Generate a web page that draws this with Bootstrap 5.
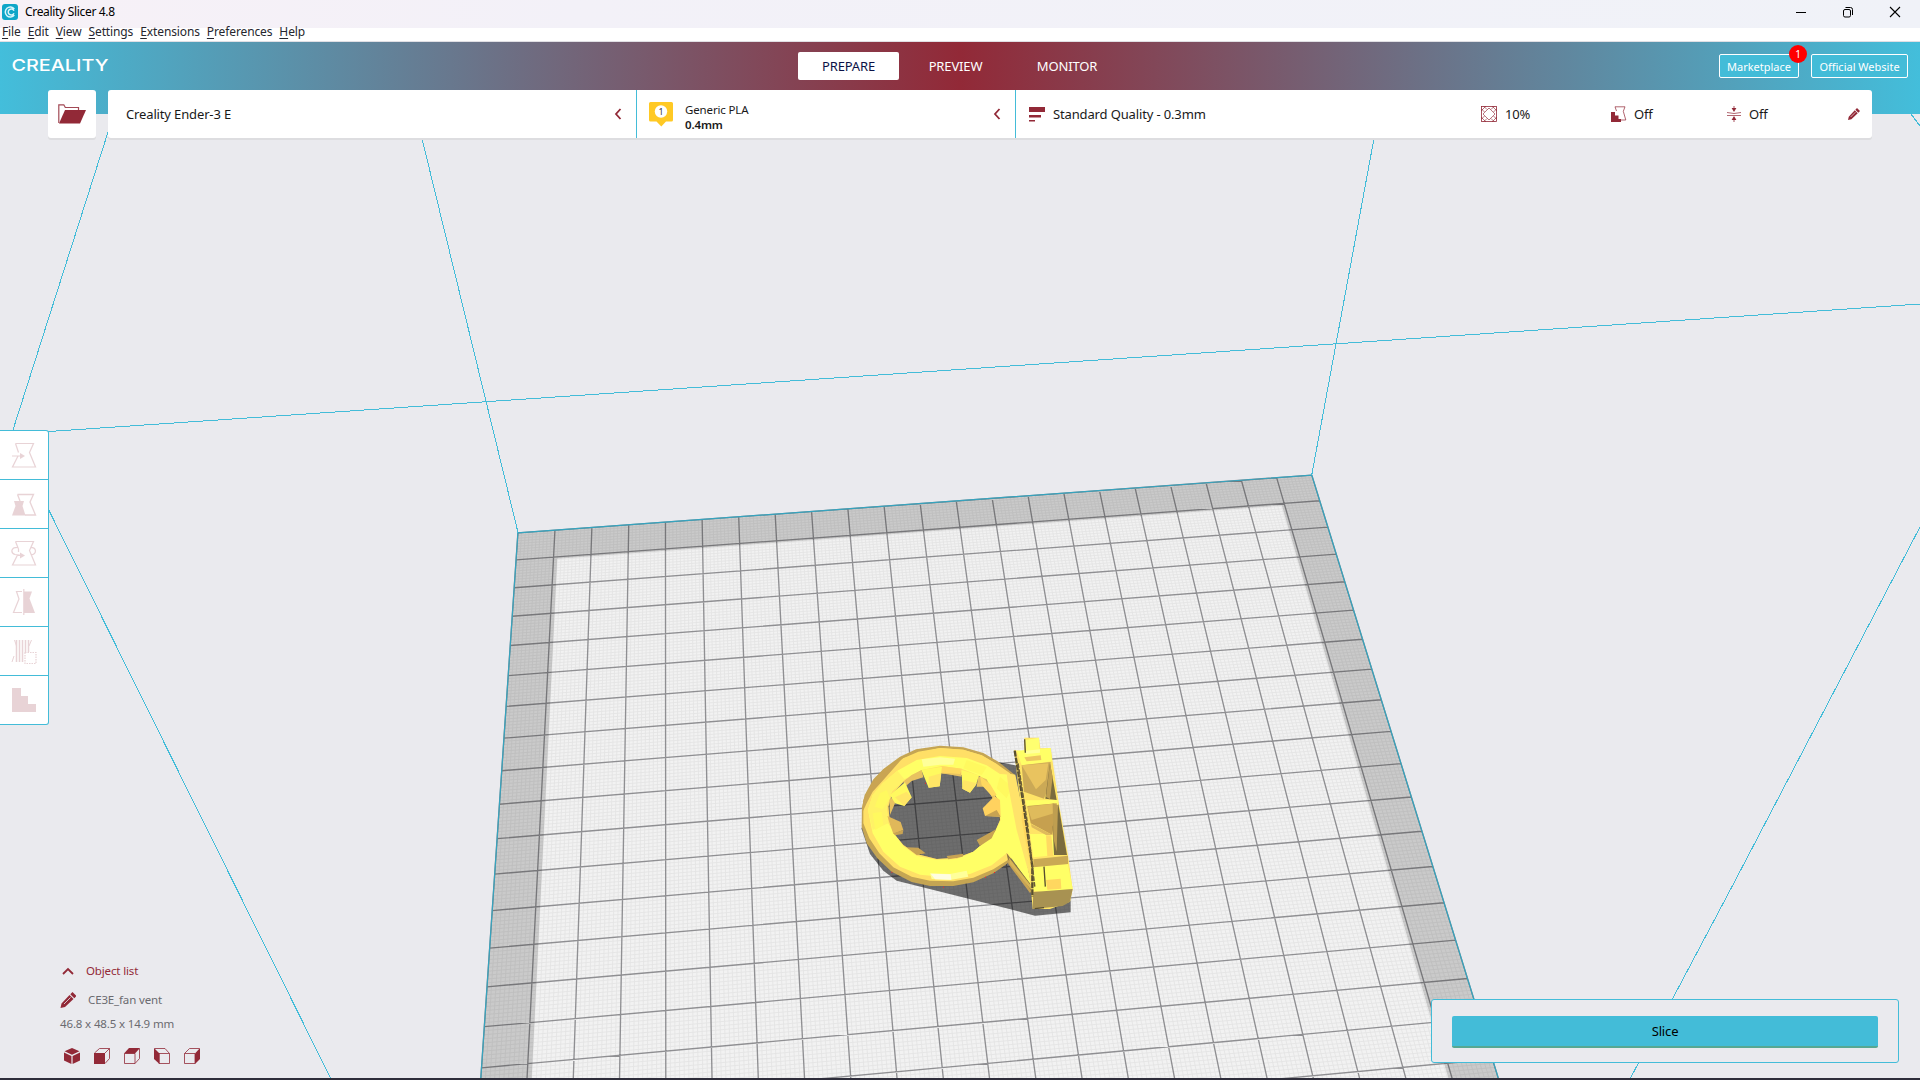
<!DOCTYPE html>
<html lang="en">
<head>
<meta charset="utf-8">
<meta name="viewport" content="width=device-width, initial-scale=1">
<title>Creality Slicer 4.8</title>
<link href="https://cdn.jsdelivr.net/npm/bootstrap@5.3.0/dist/css/bootstrap.min.css" rel="stylesheet">
<style>
  :root { --cy: #43bcd8; --wine: #922937; }
  body { font-family: "Noto Sans", "Open Sans", sans-serif; font-size: 13px; line-height: 18px; letter-spacing: -.14px; color: #191919; background: #eaeaee; overflow: hidden; }
  svg { display: block; flex: none; }
  .title-strip { height: 28px; background: linear-gradient(90deg, #f7f1f7, #f3f1f8 30%, #f0f2f8); font-size: 12px; color: #000; padding: 0 19px 5px 2px; }
  .title-strip .caption { margin-top: 1px; letter-spacing: -.32px; }
  .title-strip .win { gap: 35px; }
  .menu-strip { height: 14px; background: #fff; border-bottom: 1px solid #e0dfe4; font-size: 12px; line-height: 10px; letter-spacing: -.12px; gap: 7px; padding-left: 2px; color: #26262e; }
  .menu-strip span { position: relative; top: -1px; }
  .menu-strip u { text-underline-offset: 2px; }
  .stage { min-height: 0; }
  .scene { position: absolute; inset: 0; }
  .top-area { background: linear-gradient(90deg, #43bedb 0, #922937 50%, #43bedb 100%) 0 0 / 100% 72px no-repeat; }
  .nav-row { height: 48px; padding: 0 12px; }
  .side { flex: 1 1 0; }
  .nav-mid { gap: 6px; }
  .links { gap: 12px; }
  .stage-tab { height: 28px; border-radius: 2px; color: #fff; width: 101px; }
  .stage-tab.on { background: #fff; color: #0b1146; }
  .stage-tab.wide { width: 110px; }
  .link-box { height: 24px; border: 1px solid #fff; border-radius: 2px; background: var(--cy); color: #fff; font-size: 11px; letter-spacing: 0; padding-top: 1px; }
  .count-dot { position: absolute; right: -9px; top: -10px; width: 18px; height: 18px; border-radius: 50%; background: #f00; font-size: 10px; }
  .bar-row { height: 48px; padding: 0 48px; gap: 12px; }
  .tile { background: #fff; border-radius: 3px; box-shadow: 0 2px 0 #dddde0; }
  .seg + .seg { border-left: 1px solid var(--cy); }
  .seg-machine { width: 528px; padding: 0 14px 0 18px; }
  .seg-material { width: 379px; padding: 0 14px 0 12px; }
  .seg-profile { padding: 0 12px 0 13px; }
  .mat-text { font-size: 11.500px; line-height: 15px; margin: 6px 0 0 11px; }
  .mat-text .size { font-weight: 600; }
  .val { margin-left: 8px; }
  .tools { width: 49px; margin-top: 292px; background: #fff; border: 1px solid var(--cy); border-left: 0; border-radius: 0 3px 3px 0; }
  .tool { height: 49px; padding-left: 11px; }
  .tool + .tool { border-top: 1px solid var(--cy); }
  .tool:first-child { height: 48px; }
  .tool svg { opacity: .2; }
  .info { padding-left: 60px; padding-bottom: 14px; font-size: 11.500px; color: #6b6b70; }
  .wine { color: var(--wine); }
  .views { gap: 14px; margin: 15px 0 0 4px; }
  .slice-box { width: 468px; height: 64px; margin: 0 21px 15px 0; background: #eaeaee; border: 1px solid var(--cy); border-radius: 3px; padding: 16px 20px 14px; }
  .slice-btn { height: 32px; background: var(--cy); border-bottom: 2px solid #57a892; border-radius: 2px; color: #000; }
  .edge { height: 2px; background: #2e2d3a; }
</style>
</head>
<body>
<div class="vh-100 d-flex flex-column">
  <div class="title-strip d-flex align-items-center justify-content-between">
    <div class="d-flex align-items-center gap-2">
      <svg width="16" height="16" viewBox="0 0 16 16"><rect width="16" height="16" rx="3" fill="#0fa6c8"/><path d="M12.300 5A5 5 0 1 0 12.300 11M12 6.800A3 3 0 1 0 12 9.200" fill="none" stroke="#d9f5fb" stroke-width="1.500"/></svg>
      <span class="caption" style="margin-left:-1px">Creality Slicer 4.8</span>
    </div>
    <div class="win d-flex align-items-center">
      <svg width="12" height="12" viewBox="0 0 12 12"><path d="M1 6.500h10" stroke="#000"/></svg>
      <svg width="12" height="12" viewBox="0 0 12 12" fill="none" stroke="#000"><rect x="1.500" y="3.500" width="7" height="7.500" rx="1.500"/><path d="M3.500 1.500h5a2 2 0 0 1 2 2v5.500"/></svg>
      <svg width="12" height="12" viewBox="0 0 12 12"><path d="M1 1l10 10M11 1L1 11" stroke="#000" stroke-width="1.100"/></svg>
    </div>
  </div>
  <div class="menu-strip d-flex">
    <span><u>F</u>ile</span><span><u>E</u>dit</span><span><u>V</u>iew</span><span><u>S</u>ettings</span><span><u>E</u>xtensions</span><span><u>P</u>references</span><span><u>H</u>elp</span>
  </div>

  <div class="stage flex-grow-1 position-relative">
    <svg class="scene" width="1920" height="1036" viewBox="0 42 1920 1036">
      <path id="bed" fill="#f2f2f2"/>
      <path id="fine" fill="none" stroke="#e4e4e4" stroke-width=".9"/>
      <path id="major" fill="none" stroke="#8f8f92" stroke-width="1.350"/>
      <path id="margin" fill="#000" fill-opacity=".165" fill-rule="evenodd"/>
      <path id="rim" fill="none" stroke="#35a4bf" stroke-width="1.200"/>
      <path fill="none" stroke="#43bcd8" stroke-width="1" shape-rendering="crispEdges" d="M112.500 118L12.800 430.500M416 114L518 532.500M1378.500 114L1311.800 474.700M12.300 434L1920 304M48.500 509.500L330.500 1078M1920 527L1735.500 880L1630.500 1078M1911 114L1920 126"/>
      <!-- fan duct model -->
      <g transform="translate(840 720) scale(.33333)">
        <path fill="#000" fill-opacity=".55" d="M470 125L525 136L600 150L692 545L692 577L585 587L520 570L230 497L170 482L130 452L90 402L64 325L150 180L300 120Z"/>
        <path fill="#c5a553" fill-rule="evenodd" d="M66 262L74 225L100 178L130 147L180 110L228 88L300 77L370 82L430 99L475 125L525 165L530 400L500 432L460 460L400 487L340 498L270 498L215 486L155 455L112 415L80 370L65 320ZM190 185L245 150L305 160L365 166L420 168L450 200L475 240L480 300L465 335L430 370L400 395L350 413L290 417L230 402L190 375L165 345L150 310L145 260L155 225Z"/>
        <path fill="#ffe066" fill-rule="evenodd" d="M70 265L80 225L110 178L150 145L190 115L235 95L300 84L370 89L425 106L470 132L510 160L530 400L500 422L460 448L400 473L340 484L270 482L215 470L160 442L118 400L88 355L70 310ZM190 185L245 150L305 160L365 166L420 168L450 200L475 240L480 300L465 335L430 370L400 395L350 413L290 417L230 402L190 375L165 345L150 310L145 260L155 225Z"/>
        <path fill="#ffdf66" d="M130 160L190 115L250 95L300 84L370 89L425 106L470 132L505 165L440 135L370 110L300 106L230 118L170 155L120 200L90 240Z"/>
        <path fill="#ffff66" fill-rule="evenodd" d="M84 270L98 225L128 190L172 152L230 120L300 108L380 114L440 136L480 162L525 165L535 300L575 500L502 398L455 436L390 462L320 472L240 464L180 440L130 395L98 340ZM190 180L245 150L305 138L365 146L420 168L450 200L475 240L482 300L465 335L430 370L400 395L350 417L290 419L230 407L190 378L165 345L145 310L140 260L155 215Z"/>
        <path fill="#fff266" d="M84 270L98 225L128 190L172 152L195 180L155 215L140 260L145 310L98 330Z"/>
        <path fill="#fff95f" d="M104 260L120 220L140 210L150 235L128 268ZM98 280L125 275L130 315L106 330ZM380 120L440 142L425 165L370 145ZM480 170L515 200L500 235L470 205Z"/>
        <path fill="#ffff9a" d="M245 118L300 112L345 116L340 134L300 134L250 140ZM270 460L330 462L380 452L385 470L330 480L275 477Z"/>
        <path fill="#fffde0" d="M272 461L332 463L334 479L285 478Z"/>
        <path fill="#e8c260" d="M190 185L215 165L245 150L250 172L215 183L195 200ZM305 140L360 148L365 170L305 160ZM415 168L440 178L465 225L465 250L440 200L410 200ZM148 240L162 228L165 250L150 285Z"/>
        <path fill="#ffd85f" d="M420 168L450 192L470 225L455 228L425 195ZM305 138L365 146L360 162L306 158Z"/>
        <path fill="#fff95f" d="M244 150L306 140L299 199L266 203ZM365 150L417 166L408 195L390 218L367 206ZM150 225L195 187L215 232L193 258L165 250Z"/>
        <path fill="#ffe666" d="M266 170L304 160L299 199L266 203ZM370 180L410 190L390 218L367 206ZM165 232L200 215L215 232L193 258Z"/>
        <path fill="#ffd25f" d="M428 265L464 228L480 240L482 290L435 288Z"/>
        <path fill="#e0b85a" d="M142 288L182 306L190 330L160 342Z"/>
        <path fill="#c8a352" d="M435 288L482 290L470 270ZM160 340L190 330L188 342L165 346ZM410 360L468 328L455 355L420 378ZM200 382L235 383L257 400L230 405ZM320 408L370 401L368 410L325 418Z"/>
        <path fill="#c9a453" d="M98 215L130 180L190 112L130 150L95 190L70 240L66 280L80 250ZM500 400L575 512L570 519L505 432Z"/>
        <path fill="#8a7643" d="M500 400L578 500L576 516L520 432L505 420Z"/>
        <path fill="#d8b557" d="M506 412L572 496L572 508L510 432Z"/>
        <path fill="#ffe36a" d="M500 160L526 164L560 330L575 490L530 330L505 200Z"/>
        <path fill="#ffe466" d="M522 90L553 95L553 53L597 53L601 85L632 84L655 240L684 405L698 507L690 545L630 567L578 567L572 500Z"/>
        <path fill="#ffff66" d="M530 92L632 84L636 124L545 136ZM556 241L655 240L653 256L562 264ZM570 342L636 342L650 405L580 412ZM578 440L684 432L698 507L610 516L580 512Z"/>
        <path fill="#cba956" d="M545 136L632 126L622 210L612 236L552 215Z"/>
        <path fill="#e9c35f" d="M545 136L625 130L617 180L588 208Z"/>
        <path fill="#c6a04f" d="M562 258L650 250L637 345L572 310Z"/>
        <path fill="#dfbb5c" d="M562 260L650 250L642 280L575 300ZM573 312L638 345L618 345L575 322Z"/>
        <path fill="#7a6b3e" d="M630 130L650 240L616 236L620 205ZM655 252L681 405L642 405L638 320Z"/>
        <path fill="#bf9e50" d="M638 250L654 255L650 395L640 355ZM630 130L638 170L630 238L618 230Z"/>
        <path fill="#ffda62" d="M618 346L634 346L640 408L622 408Z"/>
        <path fill="#c9a954" d="M580 418L684 407L684 432L580 442Z"/>
        <path fill="#a89252" d="M580 516L698 507L690 545L668 558L578 567Z"/>
        <path fill="#ffd75f" d="M618 480L662 476L664 506L622 509ZM548 240L575 420L572 440L545 300Z"/>
        <path fill="#ffff70" d="M555 60L597 53L600 108L557 114Z"/>
        <path fill="#ffff9c" d="M557 92L600 88L600 98L557 102Z"/>
        <path fill="#ecc560" d="M553 112L602 106L604 120L560 124Z"/>
        <path fill="none" stroke="#574d30" stroke-width="7" stroke-dasharray="18 3" d="M524 92L550 250L577 440L577 530"/>
        <path fill="none" stroke="#6b5d38" stroke-width="5" stroke-dasharray="14 4" d="M534 130L562 310L584 500"/>
        <path fill="none" stroke="#574d30" stroke-width="4" d="M554 58L556 98M612 440L616 500M584 566L612 563"/>
        <path fill="#f22" d="M154 455h3v3h-3zM309 500h3v3h-3zM435 470h3v3h-3zM462 456h3v3h-3zM255 188h3v3h-3z"/>
      </g>
    </svg>

    <div class="position-relative h-100 d-flex flex-column">
      <div class="top-area">
        <div class="nav-row d-flex align-items-center">
          <div class="side">
            <svg width="100" height="20" viewBox="0 0 100 20"><text x="-.5" y="15.300" font-family="Inter" font-size="16" font-weight="500" letter-spacing="0" fill="#fff" textLength="97" lengthAdjust="spacingAndGlyphs">CREALITY</text></svg>
          </div>
          <div class="nav-mid d-flex">
            <div class="stage-tab on d-flex align-items-center justify-content-center">PREPARE</div>
            <div class="stage-tab d-flex align-items-center justify-content-center">PREVIEW</div>
            <div class="stage-tab wide d-flex align-items-center justify-content-center">MONITOR</div>
          </div>
          <div class="side links d-flex justify-content-end">
            <div class="link-box position-relative d-flex align-items-center justify-content-center" style="width:80px">Marketplace<span class="count-dot d-flex align-items-center justify-content-center">1</span></div>
            <div class="link-box d-flex align-items-center justify-content-center" style="width:97px">Official Website</div>
          </div>
        </div>
        <div class="bar-row d-flex">
          <div class="tile d-flex align-items-center justify-content-center" style="width:48px">
            <svg width="28" height="20" viewBox="0 0 28 20"><path d="M.8 19V.8h5l1.500 2.700h13.200V7" fill="none" stroke="#922937" stroke-width="1.200" opacity=".85"/><path d="M7 6h21l-6 13.500H1z" fill="#922937"/></svg>
          </div>
          <div class="tile flex-grow-1 d-flex">
            <div class="seg seg-machine d-flex align-items-center justify-content-between">
              <span>Creality Ender-3 E</span>
              <svg width="8" height="12" viewBox="0 0 8 12"><path d="M6.500 1L2 6l4.500 5" fill="none" stroke="#922937" stroke-width="1.800"/></svg>
            </div>
            <div class="seg seg-material d-flex align-items-center">
              <svg width="25" height="26" viewBox="0 0 25 26"><path d="M1.500 1h21a1.500 1.500 0 0 1 1.500 1.500V19a1.500 1.500 0 0 1-1.500 1.500H17L12.300 25.500 7.500 20.500h-6A1.500 1.500 0 0 1 0 19V2.500A1.500 1.500 0 0 1 1.500 1z" fill="#ffc924"/><circle cx="12" cy="10.500" r="6.200" fill="#fff"/><text x="12" y="13.800" font-size="9" text-anchor="middle" fill="#333">1</text></svg>
              <div class="mat-text flex-grow-1">Generic PLA<br><span class="size">0.4mm</span></div>
              <svg width="8" height="12" viewBox="0 0 8 12"><path d="M6.500 1L2 6l4.500 5" fill="none" stroke="#922937" stroke-width="1.800"/></svg>
            </div>
            <div class="seg seg-profile flex-grow-1 d-flex align-items-center">
              <svg width="16" height="16" viewBox="0 0 16 16" fill="#922937"><path d="M0 1h16v5H0zM0 9h12v2.500H0zM0 14h6v1.500H0z"/></svg>
              <span class="val" style="width:428px">Standard Quality - 0.3mm</span>
              <svg width="16" height="16" viewBox="0 0 16 16" fill="none" stroke="#922937" stroke-width=".8"><rect x=".5" y=".5" width="15" height="15"/><path d="M0 5L5 0M11 0l5 5M16 11l-5 5M5 16l-5-5M2 8l6-6 6 6-6 6zM0 2.500L3.500 6M0 13.500L3.500 10M16 2.500L12.500 6M16 13.500L12.500 10M2.500 0L6 3.500M13.500 0L10 3.500M2.500 16L6 12.500M13.500 16L10 12.500" opacity=".8"/></svg>
              <span class="val" style="width:106px">10%</span>
              <svg width="16" height="16" viewBox="0 0 16 16"><path d="M4 .8h10l-1.700 4.500L14.800 14H9M4 .8L5.500 5" fill="none" stroke="#922937" stroke-width=".9" opacity=".8"/><path d="M0 6h4v3.500h3.500V13H10v3H0z" fill="#922937"/></svg>
              <span class="val" style="width:93px;margin-left:7px">Off</span>
              <svg width="14" height="16" viewBox="0 0 14 16" fill="#922937"><path d="M6.500 0h1v2H10L7 6 4 2h2.500zM6.500 16h1v-2H10l-3-4-3 4h2.500z" transform="translate(1.400 0) scale(.8 1)"/><path d="M0 6.500Q7 8.500 14 6.500M0 9.500h14" fill="none" stroke="#922937" stroke-width="1" opacity=".7"/></svg>
              <span class="val flex-grow-1">Off</span>
              <svg width="12" height="12" viewBox="0 0 16 16" fill="#922937"><path d="M12 0l4 4-2.200 2.200-4-4zM9 3l4 4-8.500 8L0 16l1-4.500z"/><path d="M3.500 12L10 5.500" stroke="#fff" stroke-width=".8"/></svg>
            </div>
          </div>
        </div>
      </div>

      <div class="tools">
        <div class="tool d-flex align-items-center"><svg width="26" height="26" viewBox="0 0 26 26" fill="none" stroke="#922937"><path d="M4.500 1.500h18l-4 9 6 14.500H1.500l5.500-11M4.500 1.500l3 9M1 14h9" stroke-width="1.200"/><path d="M9 11l5 3-5 3z" fill="#922937" stroke="none"/></svg></div>
        <div class="tool d-flex align-items-center"><svg width="26" height="26" viewBox="0 0 26 26" fill="none" stroke="#922937"><path d="M6.500 3.500h16l-3.500 7.500 5.500 13H14M6.500 3.500L9 10" stroke-width="1.300"/><path d="M3 10h10l-1.500 5 3 9.500H1L4.500 15z" fill="#922937" stroke="none"/></svg></div>
        <div class="tool d-flex align-items-center"><svg width="26" height="26" viewBox="0 0 26 26" fill="none" stroke="#922937"><path d="M4.500 1.500h18l-4 9 6 14.500H1.500L6.500 15M4.500 1.500L7.500 9V12M7 7.300C-.5 7-.5 13 4 14.500l6 .8M19.500 7.300c6.500.2 6.500 6.500.5 7.700" stroke-width="1.200"/><path d="M9 12.500l5 3-5 3z" fill="#922937" stroke="none"/></svg></div>
        <div class="tool d-flex align-items-center"><svg width="26" height="26" viewBox="0 0 26 26" fill="none" stroke="#922937"><path d="M11 2.500H5.500L8 10 2.500 23.500H11M12.800 0v26" stroke-width="1.200"/><path d="M13 2.500h8l-2.500 7 5.500 14.500H13z" fill="#922937" stroke="none"/></svg></div>
        <div class="tool d-flex align-items-center"><svg width="26" height="26" viewBox="0 0 26 26" fill="none" stroke="#922937"><path d="M5.500 2v22M8.500 2v22M11.500 2v22M14.500 2v12M17.500 2v12" stroke-width="1.500"/><path d="M3.500 2l2 6M20.500 2L18 8M3 18l-2 6" stroke-width="1"/><rect x="14" y="14.500" width="11" height="11" stroke-width="1.200" stroke-dasharray="1.500 1"/></svg></div>
        <div class="tool d-flex align-items-center"><svg width="26" height="26" viewBox="0 0 26 26"><path d="M1 1h9v8h7v8h8v8H1z" fill="#922937"/></svg></div>
      </div>

      <div class="mt-auto d-flex justify-content-between align-items-end">
        <div class="info">
          <div class="wine d-flex align-items-center" style="height:18px"><svg width="16" height="10" viewBox="0 0 16 10"><path d="M3 8l5-5 5 5" fill="none" stroke="#922937" stroke-width="1.800"/></svg><span style="margin-left:10px">Object list</span></div>
          <div class="d-flex align-items-center" style="height:18px;margin-top:11px"><svg width="16" height="16" viewBox="0 0 16 16" fill="#922937"><path d="M12 0l4 4-2.200 2.200-4-4zM9 3l4 4-8.500 8L0 16l1-4.500z" transform="translate(.5 0)"/><path d="M4 12L10.500 5.500" stroke="#eaeaee" stroke-width=".8"/></svg><span style="margin-left:12px">CE3E_fan vent</span></div>
          <div style="margin-top:6px">46.8 x 48.5 x 14.9 mm</div>
          <div class="views d-flex">
            <svg width="16" height="16" viewBox="0 0 16 16" fill="#922937"><path d="M8 0l7.500 3.300L8 6.800.5 3.300zM0 4.500l7.400 3.400V16L0 12.500zM16 4.500L8.600 7.900V16l7.400-3.500z"/></svg>
            <svg width="16" height="16" viewBox="0 0 16 16" fill="none" stroke="#922937" stroke-width=".8"><path d="M.5 5l5-4.500h10v10L11 15.500M11 5l4.500-4.500"/><path d="M0 5h11v11H0z" fill="#922937" stroke="none"/></svg>
            <svg width="16" height="16" viewBox="0 0 16 16" fill="none" stroke="#922937" stroke-width=".8"><path d="M.5 5.500h10.500v10H.5zM15.500.5v10L11 15.500"/><path d="M0 5.500L5 0h11l-5 5.500z" fill="#922937" stroke="none"/></svg>
            <svg width="16" height="16" viewBox="0 0 16 16" fill="none" stroke="#922937" stroke-width=".8"><path d="M5 5.500h10.500v10H5zM.5.500H11l4.500 5"/><path d="M0 0l5.500 5.500V16L0 11z" fill="#922937" stroke="none"/></svg>
            <svg width="16" height="16" viewBox="0 0 16 16" fill="none" stroke="#922937" stroke-width=".8"><path d="M.5 5.500H11v10H.5zM.5 5.500l5-5h10"/><path d="M16 0v11l-5 5V5.500z" fill="#922937" stroke="none"/></svg>
          </div>
        </div>
        <div class="slice-box"><div class="slice-btn d-flex align-items-center justify-content-center">Slice</div></div>
      </div>
    </div>
  </div>
  <div class="edge"></div>
</div>
<script src="https://cdn.jsdelivr.net/npm/bootstrap@5.3.0/dist/js/bootstrap.bundle.min.js"></script>
<script>
  // Perspective map from build-plate cells (22 columns, 16 visible rows) to the viewport
  const q = [[517.9, 532.8], [1311.8, 475.1], [1467.5, 978.5], [481.5, 1067.8]];
  const d1 = [q[1][0] - q[2][0], q[1][1] - q[2][1]];
  const d2 = [q[3][0] - q[2][0], q[3][1] - q[2][1]];
  const d3 = [0, 1].map(i => q[0][i] - q[1][i] + q[2][i] - q[3][i]);
  const den = d1[0] * d2[1] - d2[0] * d1[1];
  const g = (d3[0] * d2[1] - d2[0] * d3[1]) / den;
  const h = (d1[0] * d3[1] - d3[0] * d1[1]) / den;
  const at = (u, v) => {
    const s = u / 22, t = v / 16, w = g * s + h * t + 1;
    return [0, 1].map(i => ((q[1][i] - q[0][i] + g * q[1][i]) * s + (q[3][i] - q[0][i] + h * q[3][i]) * t + q[0][i]) / w);
  };
  const pt = (u, v) => at(u, v).map(n => n.toFixed(2)).join(' ');
  const seg = (a, b, c, d) => 'M' + pt(a, b) + 'L' + pt(c, d);
  const poly = (a, b, c, d) => seg(a, b, c, b) + 'L' + pt(c, d) + 'L' + pt(a, d) + 'Z';
  const set = (id, d) => document.getElementById(id).setAttribute('d', d);
  let fine = '', major = '';
  for (let i = 0; i <= 220; i++) {
    if (i % 10) fine += seg(i / 10, 0, i / 10, 20) + (i < 200 ? seg(0, i / 10, 22, i / 10) : '');
  }
  for (let i = 0; i <= 22; i++) major += seg(i, 0, i, 20) + (i < 20 ? seg(0, i, 22, i) : '');
  set('bed', poly(0, 0, 22, 20));
  set('fine', fine);
  set('major', major);
  set('margin', poly(0, 0, 22, 20) + poly(1.1, 1.07, 20.92, 20));
  set('rim', seg(0, 20, 0, 0) + 'L' + pt(22, 0) + 'L' + pt(22, 20));
</script>
</body>
</html>
